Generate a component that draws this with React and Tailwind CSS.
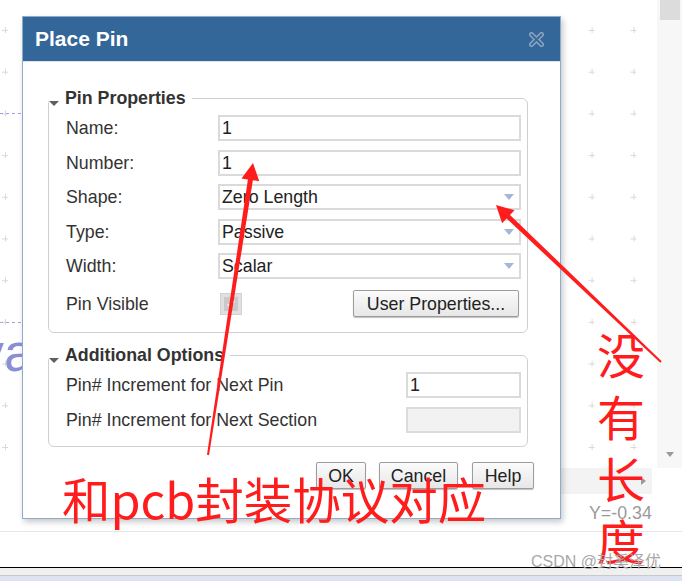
import React from "react";

const RED = "#ff1c1c";

function Caret() {
    return (
        <svg width="10" height="6" viewBox="0 0 10 6" className="shrink-0">
            <path d="M0 0 H10 L5 6 Z" fill="#a3b7d6" />
        </svg>
    );
}

function LegendCaret() {
    return (
        <svg width="10" height="5" viewBox="0 0 10 5" className="shrink-0 mt-[14px]">
            <path d="M0 0 H10 L5 5 Z" fill="#5f5f5f" />
        </svg>
    );
}

function CloseIcon() {
    return (
        <svg width="15" height="15" viewBox="0 0 15 15">
            <path d="M2.5 2.5 L12.5 12.5 M12.5 2.5 L2.5 12.5" stroke="#8ea6c2" strokeWidth="5" strokeLinecap="round" />
            <path d="M2.5 2.5 L12.5 12.5 M12.5 2.5 L2.5 12.5" stroke="#3b6b9b" strokeWidth="2.2" strokeLinecap="round" />
        </svg>
    );
}

function Field({value, select, disabled, width}) {
    return (
        <div
            className={
                "h-[26px] border-2 flex items-center justify-between pl-[2px] pr-[5px] text-[#222] " +
                (disabled ? "bg-[#f2f2f2] border-[#dcdcdc] " : "bg-white border-[#dadada] ") +
                width
            }
        >
            <span>{value}</span>
            {select && <Caret />}
        </div>
    );
}

function Btn({label, width}) {
    return (
        <div
            className={
                "h-[27px] border border-[#9c9c9c] rounded-[2px] bg-linear-to-b from-[#fbfbfb] to-[#e7e7e7] shadow-[0_1px_1px_rgba(0,0,0,0.25)] text-[#222] flex items-center justify-center " +
                width
            }
        >
            {label}
        </div>
    );
}

function Row({label, children}) {
    return (
        <div className="flex items-center h-[26px]">
            <div className="w-[152px] shrink-0 text-[#333]">{label}</div>
            {children}
        </div>
    );
}

export default function App() {
    return (
        <div className="w-[682px] h-[581px] relative overflow-hidden bg-white font-['Liberation_Sans',Arial,sans-serif] text-[17.8px] leading-[22px]">
            {/* app behind the dialog */}
            <div className="flex flex-col h-full">
                <div className="h-[468px] flex">
                    <div className="flex-1 relative">
                        <svg className="absolute inset-0" width="657" height="468">
                            <defs>
                                <pattern id="grid" x="2" y="27" width="41.9" height="41.7" patternUnits="userSpaceOnUse">
                                    <path d="M0 3.5 H6 M3.5 0 V6" stroke="#d9d9d9" strokeWidth="1" />
                                </pattern>
                            </defs>
                            <rect width="100%" height="100%" fill="url(#grid)" />
                            <path d="M0 113.5 H22" stroke="#9ea4e6" strokeWidth="1" strokeDasharray="3 3" />
                            <path d="M0 322.5 H22" stroke="#9ea4e6" strokeWidth="1" strokeDasharray="3 3" />
                        </svg>
                        <div className="absolute left-[-23px] top-[325px] text-[54px] leading-none text-[#8a8fd4]">va</div>
                    </div>
                    <div className="w-[25px] bg-[#f7f7f7] flex flex-col items-center justify-between pb-[11px]">
                        <div className="w-[20px] h-[20px] bg-[#dcdcdc]" />
                        <svg width="8" height="5" viewBox="0 0 8 5">
                            <path d="M0 0 H8 L4 5 Z" fill="#9a9a9a" />
                        </svg>
                    </div>
                </div>
                <div className="h-[26px] flex">
                    <div className="w-[22px]" />
                    <div className="flex-1 bg-[#f3f3f3] flex items-center justify-end pr-[6px]">
                        <svg width="5" height="8" viewBox="0 0 5 8">
                            <path d="M0 0 L5 4 L0 8 Z" fill="#9a9a9a" />
                        </svg>
                    </div>
                    <div className="w-[30px]" />
                </div>
                <div className="h-[38px] border-b border-[#e6e6e6] flex items-center pl-[589px] text-[#9a9a9a]">
                    Y=-0.34
                </div>
                <div className="h-[35px]" />
                <div className="h-[1px] bg-black" />
                <div className="h-[8px] bg-[#f0f0f0] border-b border-[#c9c9c9]" />
                <div className="flex-1 bg-[#dde3f2]" />
            </div>

            {/* Place Pin dialog */}
            <div className="absolute left-[22px] top-[16px] w-[539px] h-[503px] flex flex-col bg-white border border-[#8dabcd] shadow-[2px_3px_6px_rgba(0,0,0,0.22)]">
                <div className="h-[45px] shrink-0 bg-[#336699] flex items-center justify-between pl-[12px] pr-[16px] border-b border-[#dfe5ec]">
                    <span className="text-white font-bold text-[21px]">Place Pin</span>
                    <CloseIcon />
                </div>
                <div className="flex flex-col pl-[25px] pr-[32px] pt-[25px]">
                    <fieldset className="border border-[#cfcfcf] rounded-[6px]">
                        <legend className="flex items-start gap-[6px] pr-[6px] font-bold text-[#333]">
                            <LegendCaret />
                            <span>Pin Properties</span>
                        </legend>
                        <div className="flex flex-col gap-[8.5px] pt-[6px] pl-[17px] pr-[6px] pb-[15px]">
                            <Row label="Name:">
                                <Field value="1" width="w-[303px]" />
                            </Row>
                            <Row label="Number:">
                                <Field value="1" width="w-[303px]" />
                            </Row>
                            <Row label="Shape:">
                                <Field value="Zero Length" select width="w-[303px]" />
                            </Row>
                            <Row label="Type:">
                                <Field value="Passive" select width="w-[303px]" />
                            </Row>
                            <Row label="Width:">
                                <Field value="Scalar" select width="w-[303px]" />
                            </Row>
                            <div className="flex items-center h-[27px] mt-[2.5px]">
                                <div className="w-[152px] shrink-0 text-[#333]">Pin Visible</div>
                                <div className="ml-[2px] w-[22px] h-[22px] bg-[#e0e0e0] border border-[#d2d2d2] flex items-center justify-center">
                                    <div className="w-[14px] h-[14px] bg-[#c9c9c9] flex items-center justify-center">
                                        <svg width="10" height="10" viewBox="0 0 10 10">
                                            <path d="M1.5 5 L4 7.5 L8.5 2" stroke="#f4f4f4" strokeWidth="1.6" fill="none" />
                                        </svg>
                                    </div>
                                </div>
                                <div className="flex-1" />
                                <div className="mr-[2px]">
                                    <Btn label="User Properties..." width="w-[166px]" />
                                </div>
                            </div>
                        </div>
                    </fieldset>

                    <fieldset className="mt-[11px] border border-[#cfcfcf] rounded-[6px]">
                        <legend className="flex items-start gap-[6px] pr-[6px] font-bold text-[#333]">
                            <LegendCaret />
                            <span>Additional Options</span>
                        </legend>
                        <div className="flex flex-col gap-[9px] pt-[6px] pl-[17px] pr-[6px] pb-[13px]">
                            <div className="flex items-center h-[26px]">
                                <div className="w-[340px] shrink-0 text-[#333]">Pin# Increment for Next Pin</div>
                                <Field value="1" width="w-[115px]" />
                            </div>
                            <div className="flex items-center h-[26px]">
                                <div className="w-[340px] shrink-0 text-[#333]">Pin# Increment for Next Section</div>
                                <Field value="" disabled width="w-[115px]" />
                            </div>
                        </div>
                    </fieldset>

                    <div className="flex justify-end gap-[13px] mt-[15px] mr-[-6px]">
                        <Btn label="OK" width="w-[50px]" />
                        <Btn label="Cancel" width="w-[79px]" />
                        <div className="ml-[1px]">
                            <Btn label="Help" width="w-[62px]" />
                        </div>
                    </div>
                </div>
            </div>

            {/* red annotations */}
            <svg className="absolute inset-0 pointer-events-none" width="682" height="581">
                <polygon
                    fill={RED}
                    points="207,454.85 247.9,179.4 241.5,178.4 253,163 259.3,181.2 252.9,180.2 209,455.15"
                />
                <polygon
                    fill={RED}
                    points="661.7,361.3 510,214.9 514.5,210.2 496,205 502.1,223.2 506.6,218.5 660.3,362.7"
                />
            </svg>
            <div
                className="absolute left-[62px] top-[474px] text-[48.5px] leading-none whitespace-nowrap font-['Noto_Sans_CJK_SC',sans-serif]"
                style={{color: RED}}
            >
                和pcb封装协议对应
            </div>
            <div
                className="absolute left-[597px] top-[322px] flex flex-col text-[48px] leading-[62px] font-['Noto_Sans_CJK_SC',sans-serif]"
                style={{color: RED}}
            >
                <span>没</span>
                <span>有</span>
                <span>长</span>
                <span>度</span>
            </div>
            <div className="absolute left-[531px] top-[552px] text-[16px] leading-[20px] text-[#a8a8a8] whitespace-nowrap font-['Liberation_Sans','Noto_Sans_CJK_SC',sans-serif]">
                CSDN @封奚泽优
            </div>
        </div>
    );
}
